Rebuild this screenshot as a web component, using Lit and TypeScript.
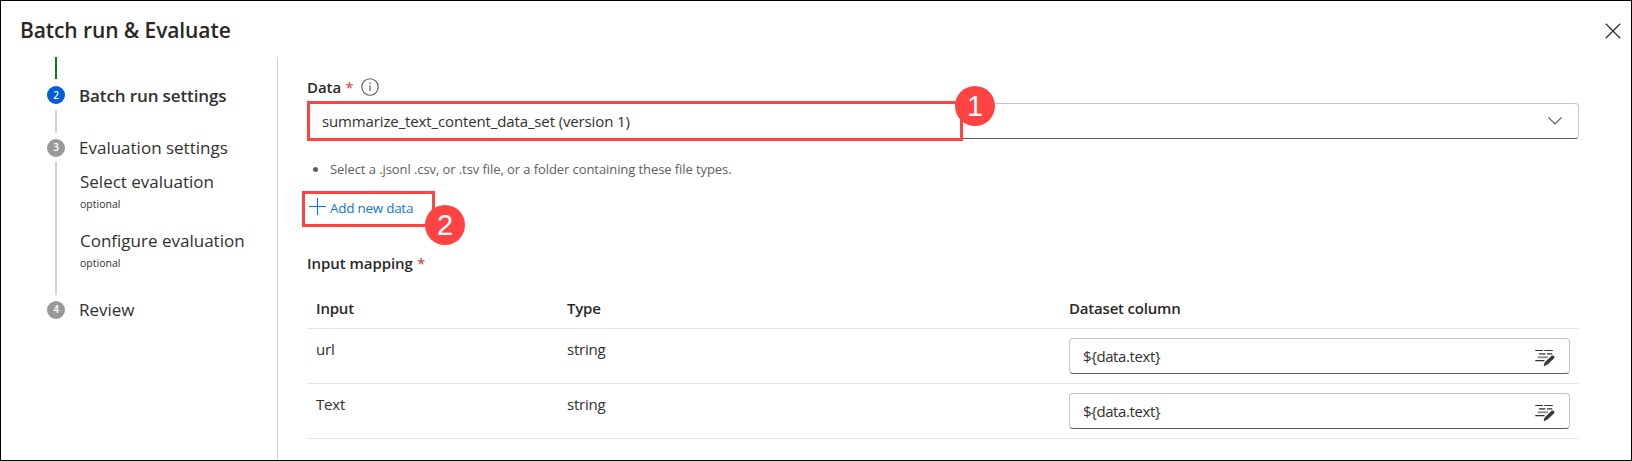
import { LitElement, html, css, svg } from "lit";
import { customElement } from "lit/decorators.js";

const closeIcon = svg`<svg class="icon" width="16" height="16" viewBox="0 0 16 16"><path d="M.8.8 15.2 15.2M15.2.8.8 15.2" fill="none" stroke="#323130" stroke-width="1.3"/></svg>`;
const chevronIcon = svg`<svg class="icon" width="16" height="10" viewBox="0 0 16 10"><path d="M1.4 1.4 8 8 14.6 1.4" fill="none" stroke="#5a5856" stroke-width="1.2"/></svg>`;
const infoIcon = svg`<svg class="icon" width="18" height="18" viewBox="0 0 18 18"><circle cx="9" cy="9" r="8.2" fill="none" stroke="#555" stroke-width="1.1"/><path d="M9 7.6V13" stroke="#444" stroke-width="1.1"/><circle cx="9" cy="5.3" r=".8" fill="#444"/></svg>`;
const plusIcon = svg`<svg class="icon" width="17" height="17" viewBox="0 0 17 17"><path d="M8.5 0V17M0 8.5H17" stroke="#0f78d4" stroke-width="1.15"/></svg>`;
const editIcon = svg`<svg class="icon" width="20" height="18" viewBox="0 0 20 18">
  <path d="M.3 1.5H8M9.3 1.5H17.8M4 4.8H10.5M12 4.8H17.2M.3 11.6H9.5" stroke="#323130" stroke-width="1.15"/>
  <path d="M2.7 8.3H13" stroke="#8c8a88" stroke-width="1.8"/>
  <path d="M16.6 6.8c1.6-1.2 3.6.7 2.5 2.4l-6.2 6.1-3.9 1.9c-.5-1 .3-3.2 1.1-4.2z" fill="#3b3a39"/></svg>`;

@customElement("app-root")
export class AppRoot extends LitElement {
  static styles = css`
    :host { display: block; font-family: "Open Sans", "Noto Sans", sans-serif; color: #323130; }
    * { box-sizing: border-box; }
    .icon { display: block; flex: none; }
    .panel { height: 461px; border: 1px solid #000; background: #fff; display: flex; flex-direction: column; overflow: hidden; }
    .head { height: 56px; flex: none; display: flex; justify-content: space-between; padding: 0 10px 0 19px; }
    .title { margin: 0; font-size: 21px; font-weight: 600; line-height: 58px; letter-spacing: -0.1px; white-space: nowrap; color: #292827; }
    .close { padding-top: 22px; }
    .body { flex: 1; display: flex; min-height: 0; }
    .side { width: 277px; flex: none; border-right: 1px solid #d2d0ce; padding-left: 46px; white-space: nowrap; }
    .done { width: 2px; height: 22px; margin: 0 0 7px 8px; background: #107c10; }
    .step { display: flex; gap: 14px; }
    .rail { width: 18px; display: flex; flex-direction: column; align-items: center; }
    .dot { width: 18px; height: 18px; flex: none; border-radius: 50%; background: #999; color: #fff; font-size: 10px; font-weight: 600; line-height: 17px; text-align: center; }
    .dot.on { background: #015cda; line-height: 19px; }
    .line { width: 2px; flex: 1; background: #d2d2d2; margin: 6px 0; }
    .s2 { height: 53px; }
    .s3 { height: 162px; }
    .s3 .line { margin-top: 5px; }
    .name { font-size: 17px; line-height: 18px; letter-spacing: 0; }
    .on-name { font-weight: 600; letter-spacing: -0.12px; line-height: 20px; }
    .sub { margin: 13px 0 0 1px; }
    .sub + .sub { margin-top: 14px; }
    .sub-name { font-size: 17px; line-height: 23px; letter-spacing: 0; }
    .opt { font-size: 10.5px; line-height: 22px; letter-spacing: 0; }
    .main { flex: 1; padding: 18px 52px 0 29px; white-space: nowrap; font-size: 15px; }
    .label { display: flex; font-weight: 600; height: 24px; line-height: 24px; letter-spacing: -0.05px; color: #292827; }
    .star { color: #d13438; font-weight: 400; margin-left: 4px; letter-spacing: 0; }
    .label .icon { margin: 3px 0 0 8px; }
    .select { position: relative; margin-top: 4px; height: 36px; border: 1px solid #c8c6c4; border-bottom-color: #605e5c; border-radius: 4px; padding: 0 15px 0 14px; display: flex; align-items: center; justify-content: space-between; }
    .value { letter-spacing: -0.13px; }
    .field .value { letter-spacing: -0.4px; }
    .mark { position: absolute; border: 3px solid #ff4343; }
    .m1 { left: -1px; top: -3px; width: 656px; height: 40px; }
    .m2 { left: -5px; top: -7px; width: 133px; height: 36px; }
    .badge { position: absolute; width: 40px; height: 40px; border-radius: 50%; background: #ff4343; color: #fff; font: 29px/41px "Liberation Sans", Arial, sans-serif; text-align: center; }
    .b1 { left: 637px; left: 647px; top: -18px; }
    .b2 { left: 118px; top: 7px; }
    .hint { display: flex; align-items: center; height: 24px; margin-top: 18px; padding-left: 6px; font-size: 13px; color: #605e5c; letter-spacing: -0.08px; }
    .bullet { width: 5px; height: 5px; border-radius: 50%; background: #605e5c; margin-right: 12px; }
    .add { position: relative; display: flex; align-items: flex-start; margin-top: 17px; height: 22px; padding-left: 2px; color: #0f78d4; font-size: 13.5px; }
    .add-text { margin-left: 4px; line-height: 21px; letter-spacing: -0.28px; }
    .map { margin-top: 31px; }
    .row { display: grid; grid-template-columns: 251px 501px 1fr; border-bottom: 1px solid #e6e6e6; padding: 0 9px; height: 55px; }
    .row.hd { height: 54px; font-weight: 600; letter-spacing: -0.2px; color: #292827; }
    .row.hd .cell { line-height: 66px; }
    .row .cell:nth-child(3) { padding-left: 1px; }
    .cell { line-height: 40px; letter-spacing: -0.2px; }
    .field { height: 36px; margin: 9px 0 0 1px; border: 1px solid #c8c6c4; border-bottom-color: #605e5c; border-radius: 4px; padding: 0 14px 0 13px; display: flex; align-items: center; justify-content: space-between; }
    .field .icon { margin-top: 4px; }
  `;

  row(name: string) {
    return html`<div class="row"><div class="cell">${name}</div><div class="cell">string</div>
      <div class="field"><span class="value">${"${data.text}"}</span>${editIcon}</div></div>`;
  }

  sub(name: string) {
    return html`<div class="sub"><div class="sub-name">${name}</div><div class="opt">optional</div></div>`;
  }

  render() {
    return html`<div class="panel">
      <div class="head"><h1 class="title">Batch run &amp; Evaluate</h1><div class="close">${closeIcon}</div></div>
      <div class="body">
        <div class="side">
          <div class="done"></div>
          <div class="step s2"><div class="rail"><div class="dot on">2</div><div class="line"></div></div><div class="name on-name">Batch run settings</div></div>
          <div class="step s3"><div class="rail"><div class="dot">3</div><div class="line"></div></div>
            <div><div class="name">Evaluation settings</div>${this.sub("Select evaluation")}${this.sub("Configure evaluation")}</div></div>
          <div class="step"><div class="rail"><div class="dot">4</div></div><div class="name">Review</div></div>
        </div>
        <div class="main">
          <div class="label">Data<span class="star">*</span>${infoIcon}</div>
          <div class="select"><span class="value">summarize_text_content_data_set (version 1)</span>${chevronIcon}
            <div class="mark m1"></div><div class="badge b1">1</div></div>
          <div class="hint"><span class="bullet"></span>Select a .jsonl .csv, or .tsv file, or a folder containing these file types.</div>
          <div class="add">${plusIcon}<span class="add-text">Add new data</span>
            <div class="mark m2"></div><div class="badge b2">2</div></div>
          <div class="label map">Input mapping<span class="star">*</span></div>
          <div class="row hd"><div class="cell">Input</div><div class="cell">Type</div><div class="cell">Dataset column</div></div>
          ${this.row("url")}${this.row("Text")}
        </div>
      </div>
    </div>`;
  }
}
